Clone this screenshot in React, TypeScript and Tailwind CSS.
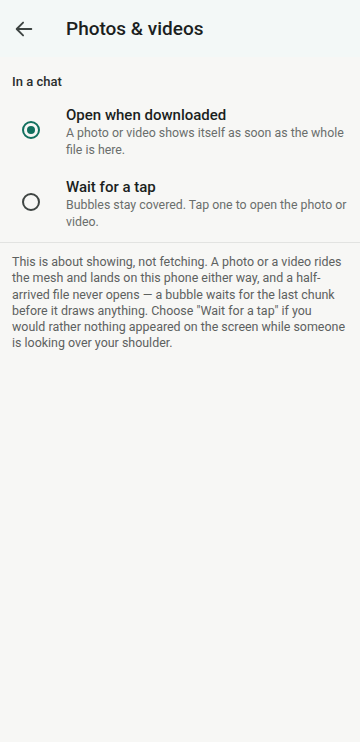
import type { FC } from "react";

const BackArrow: FC = () => (
  <svg viewBox="0 0 24 24" className="w-[22px] h-[22px]" fill="none" stroke="#3d4442" strokeWidth={2} strokeLinecap="round" strokeLinejoin="round">
    <path d="M20 12H4.5M11 5l-7 7 7 7" />
  </svg>
);

const Radio: FC<{ checked: boolean }> = ({ checked }) => (
  <div
    className={
      checked
        ? "mt-[16px] w-[18px] h-[18px] rounded-full border-2 border-[#12705f] flex items-center justify-center"
        : "mt-[16px] w-[18px] h-[18px] rounded-full border-2 border-[#3f4543] flex items-center justify-center"
    }
  >
    {checked && <div className="w-[8px] h-[8px] rounded-full bg-[#12705f]" />}
  </div>
);

const Option: FC<{ title: string; desc: string; checked: boolean }> = ({ title, desc, checked }) => (
  <div className="flex items-start pl-[22px] pr-[10px] py-[8px]">
    <Radio checked={checked} />
    <div className="ml-[26px] flex-1">
      <div className="text-[15px] leading-[20px] text-[#1b1f1e] font-medium">{title}</div>
      <div className="text-[12.35px] leading-[17px] text-[#6a6e6c]">{desc}</div>
    </div>
  </div>
);

export default function App() {
  return (
    <div className="w-[360px] min-h-[742px] bg-[#f7f7f5] flex flex-col font-[Roboto,sans-serif]">
      <div className="h-[57px] bg-[#f3f8f7] flex items-center">
        <div className="pl-[13px] w-[66px] pt-[1px]">
          <BackArrow />
        </div>
        <div className="text-[19px] font-medium text-[#1b1f1e] pt-[2px]">Photos &amp; videos</div>
      </div>
      <div className="px-3 pt-[16px] pb-[7px] text-[13px] leading-[17px] font-medium text-[#2a2e2d]">In a chat</div>
      <Option
        checked
        title="Open when downloaded"
        desc="A photo or video shows itself as soon as the whole file is here."
      />
      <div className="h-[2px]" />
      <Option
        checked={false}
        title="Wait for a tap"
        desc="Bubbles stay covered. Tap one to open the photo or video."
      />
      <div className="mt-[3px] h-px bg-[#e2e3e1]" />
      <p className="px-3 pt-[11px] text-[12.45px] leading-[16.3px] text-[#5d615f]">
        This is about showing, not fetching. A photo or a video rides the mesh and lands on this phone either way, and a half-arrived file never opens — a bubble waits for the last chunk before it draws anything. Choose "Wait for a tap" if you would rather nothing appeared on the screen while someone is looking over your shoulder.
      </p>
    </div>
  );
}
